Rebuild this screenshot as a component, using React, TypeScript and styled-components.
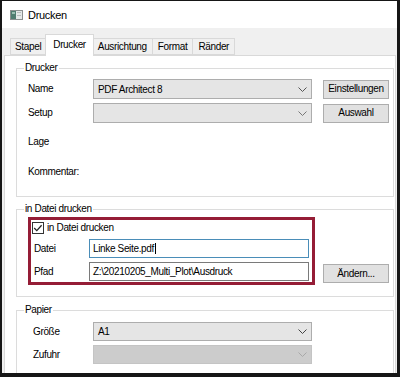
import React from "react";
import styled, { createGlobalStyle } from "styled-components";

const Global = createGlobalStyle`
  html, body { margin: 0; padding: 0; background: #ffffff; }
  body {
    font-family: "Liberation Sans", Arial, sans-serif;
    font-size: 10px;
    letter-spacing: -0.35px;
    color: #000;
  }
  * { box-sizing: border-box; }
`;

const Window = styled.div`
  width: 400px;
  height: 377px;
  border-style: solid;
  border-color: #161616;
  border-width: 1px 3px 4px 2px;
  background: #f0f0f0;
  display: flex;
  flex-direction: column;
  overflow: hidden;
`;

const TitleBar = styled.div`
  height: 27px;
  flex: none;
  background: #ffffff;
  display: flex;
  align-items: center;
  gap: 5px;
  padding-left: 8px;
`;

const Title = styled.span`
  font-size: 11px;
  letter-spacing: -0.3px;
`;

const TabStrip = styled.div`
  height: 27px;
  flex: none;
  display: flex;
  align-items: flex-end;
  padding-left: 8px;
  position: relative;
  z-index: 1;
`;

const Tab = styled.div<{ $active?: boolean }>`
  height: ${(p) => (p.$active ? 22 : 17)}px;
  padding: ${(p) => (p.$active ? "4px 7px 0" : "0 5px")};
  margin: 0 ${(p) => (p.$active ? -1 : 0)}px ${(p) => (p.$active ? -1 : 0)}px -1px;
  display: flex;
  align-items: ${(p) => (p.$active ? "flex-start" : "center")};
  line-height: 12px;
  background: ${(p) => (p.$active ? "#ffffff" : "#f0f0f0")};
  border: 1px solid #d9d9d9;
  border-bottom: ${(p) => (p.$active ? "none" : "1px solid #d9d9d9")};
  position: relative;
  z-index: ${(p) => (p.$active ? 2 : 1)};
  &:first-child { margin-left: 0; padding: 0 4px; }
`;

const TabPage = styled.div`
  flex: 1;
  background: #ffffff;
  border: 1px solid #d9d9d9;
  border-bottom: none;
  margin: 0 1px 0 2px;
  padding: 6px 1px 0 11px;
  display: flex;
  flex-direction: column;
  overflow: hidden;
`;

const Group = styled.fieldset<{ $mt?: number }>`
  margin: ${(p) => p.$mt ?? 0}px 0 0 0;
  padding: 0;
  border: 1px solid #dcdcdc;
  min-width: 0;
  flex: none;
`;

const Legend = styled.legend`
  padding: 0 1px;
  margin-left: 7px;
  line-height: 12px;
  font-size: 10px;
`;

const Body = styled.div<{ $pad: string }>`
  padding: ${(p) => p.$pad};
  display: flex;
  flex-direction: column;
`;

const FieldRow = styled.div<{ $mt?: number; $label?: number; $h?: number }>`
  display: grid;
  grid-template-columns: ${(p) => p.$label ?? 65}px 219px 66px;
  column-gap: 0;
  align-items: center;
  height: ${(p) => p.$h ?? 20}px;
  margin-top: ${(p) => p.$mt ?? 0}px;
  & > button { margin-left: 11px; }
`;

const Label = styled.span`
  line-height: 12px;
  white-space: nowrap;
`;

const Combo = styled.div<{ $disabled?: boolean; $h?: number }>`
  height: ${(p) => p.$h ?? 20}px;
  display: flex;
  align-items: center;
  justify-content: space-between;
  padding: 0 4px 0 4px;
  background: ${(p) => (p.$disabled ? "#cccccc" : "#e5e5e5")};
  border: 1px solid ${(p) => (p.$disabled ? "#c4c4c4" : "#adadad")};
  white-space: nowrap;
`;

const Button = styled.button`
  height: 19px;
  width: 66px;
  padding: 0;
  background: #e1e1e1;
  border: 1px solid #adadad;
  font: inherit;
  letter-spacing: inherit;
  color: #000;
  line-height: 12px;
`;

const FileRow = styled.div`
  display: flex;
  align-items: flex-end;
  gap: 8px;
`;

const Highlight = styled.div`
  width: 287px;
  height: 68px;
  border: 3px solid #951d36;
  padding: 0 0 0 1px;
  display: flex;
  flex-direction: column;
`;

const CheckRow = styled.div`
  height: 16px;
  display: flex;
  align-items: center;
  gap: 3px;
`;

const InputRow = styled.div<{ $mt: number }>`
  display: grid;
  grid-template-columns: 55px 220px;
  align-items: center;
  height: 19px;
  margin-top: ${(p) => p.$mt}px;
  padding-left: 2px;
`;

const Input = styled.div<{ $focused?: boolean }>`
  height: 19px;
  display: flex;
  align-items: center;
  padding-left: 3px;
  background: #ffffff;
  border: 1px solid ${(p) => (p.$focused ? "#4a8db8" : "#7a7a7a")};
  white-space: nowrap;
`;

const Caret = styled.span`
  display: inline-block;
  width: 1px;
  height: 11px;
  background: #000;
  margin-left: 1px;
`;

const SideButton = styled(Button)`
  margin-bottom: 2px;
`;

const Chevron = ({ color }: { color: string }) => (
  <svg width="9" height="5" viewBox="0 0 9 5">
    <polyline points="0.5,0.5 4.5,4.5 8.5,0.5" fill="none" stroke={color} strokeWidth="1" />
  </svg>
);

const AppIcon = () => (
  <svg width="13" height="10" viewBox="0 0 13 10">
    <rect x="0.5" y="0.5" width="12" height="9" fill="#e4e8e8" stroke="#8a8f8f" />
    <rect x="1" y="1" width="5" height="8" fill="#4f7d70" />
    <rect x="2" y="2" width="3" height="2" fill="#9bc0b3" />
    <rect x="7" y="2" width="4" height="1" fill="#b8bdbd" />
    <rect x="7" y="5" width="4" height="1" fill="#b8bdbd" />
  </svg>
);

const CheckBox = () => (
  <svg width="12" height="12" viewBox="0 0 12 12">
    <rect x="0.5" y="0.5" width="11" height="11" fill="#ffffff" stroke="#333333" />
    <polyline points="2.2,6 4.8,8.6 9.6,3.2" fill="none" stroke="#222222" strokeWidth="1.3" />
  </svg>
);

export default function App() {
  return (
    <>
      <Global />
      <Window>
        <TitleBar>
          <AppIcon />
          <Title>Drucken</Title>
        </TitleBar>
        <TabStrip>
          <Tab>Stapel</Tab>
          <Tab $active>Drucker</Tab>
          <Tab>Ausrichtung</Tab>
          <Tab>Format</Tab>
          <Tab>Ränder</Tab>
        </TabStrip>
        <TabPage>
          <Group>
            <Legend>Drucker</Legend>
            <Body $pad="5px 0 14px 11px">
              <FieldRow>
                <Label>Name</Label>
                <Combo>
                  <span>PDF Architect 8</span>
                  <Chevron color="#555555" />
                </Combo>
                <Button>Einstellungen</Button>
              </FieldRow>
              <FieldRow $mt={4}>
                <Label>Setup</Label>
                <Combo>
                  <span />
                  <Chevron color="#777777" />
                </Combo>
                <Button>Auswahl</Button>
              </FieldRow>
              <FieldRow $mt={9}>
                <Label>Lage</Label>
              </FieldRow>
              <FieldRow $mt={10}>
                <Label>Kommentar:</Label>
              </FieldRow>
            </Body>
          </Group>
          <Group $mt={6}>
            <Legend>in Datei drucken</Legend>
            <Body $pad="2px 0 11px 11px">
              <FileRow>
                <Highlight>
                  <CheckRow>
                    <CheckBox />
                    <Label>in Datei drucken</Label>
                  </CheckRow>
                  <InputRow $mt={3}>
                    <Label>Datei</Label>
                    <Input $focused>
                      Linke Seite.pdf
                      <Caret />
                    </Input>
                  </InputRow>
                  <InputRow $mt={4}>
                    <Label>Pfad</Label>
                    <Input>Z:\20210205_Multi_Plot\Ausdruck</Input>
                  </InputRow>
                </Highlight>
                <SideButton>Ändern...</SideButton>
              </FileRow>
            </Body>
          </Group>
          <Group $mt={7}>
            <Legend>Papier</Legend>
            <Body $pad="6px 0 30px 16px">
              <FieldRow $label={60} $h={19}>
                <Label>Größe</Label>
                <Combo $h={19}>
                  <span>A1</span>
                  <Chevron color="#444444" />
                </Combo>
              </FieldRow>
              <FieldRow $label={60} $h={19} $mt={4}>
                <Label>Zufuhr</Label>
                <Combo $h={19} $disabled>
                  <span />
                  <Chevron color="#a8a8a8" />
                </Combo>
              </FieldRow>
            </Body>
          </Group>
        </TabPage>
      </Window>
    </>
  );
}
